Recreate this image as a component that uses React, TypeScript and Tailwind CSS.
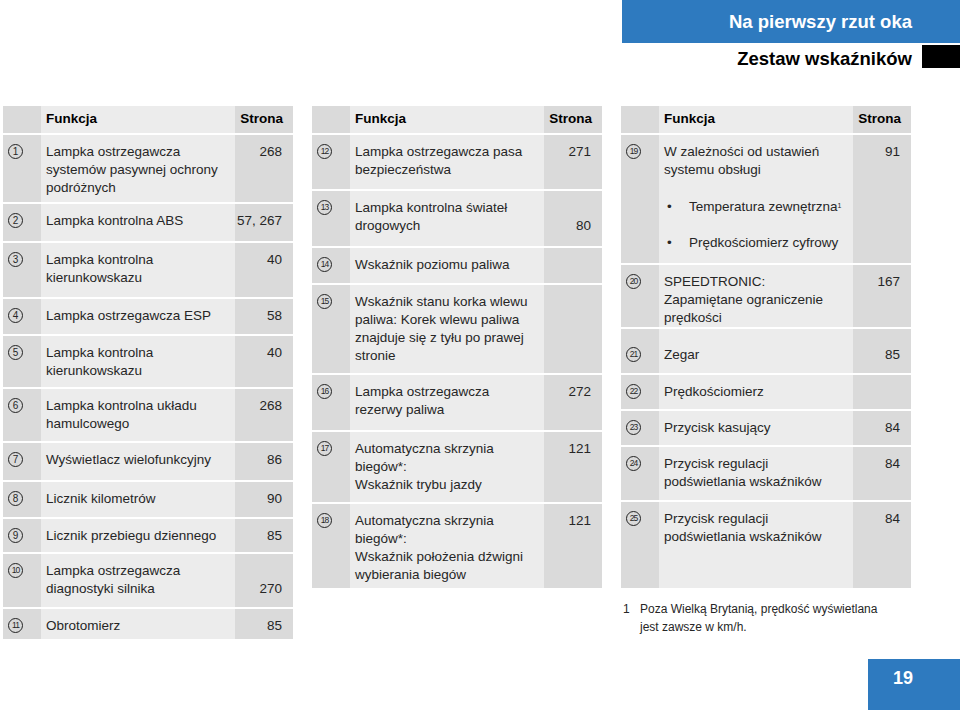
import type { ReactNode } from "react";

type Row = {
  n: number;
  text: ReactNode;
  page?: string;
  h: string;
  low?: boolean;
  pt?: string;
};

const Circle = ({ n }: { n: number }) => (
  <span
    className={`flex h-[15px] w-[15px] items-center justify-center rounded-full border-[1.3px] border-[#222] font-medium leading-none ${
      n > 9 ? "text-[8.5px] tracking-[-0.9px]" : "text-[10px]"
    }`}
  >
    {n}
  </span>
);

const Table = ({ rows }: { rows: Row[] }) => (
  <div className="flex w-[290px] flex-col gap-[2px]">
    <div className="flex h-[27px] font-bold text-black">
      <div className="w-[38px] bg-[#dadada]" />
      <div className="flex flex-1 items-center bg-[#ececec] pb-[2px] pl-[5px]">Funkcja</div>
      <div className="flex w-[58px] items-center justify-end bg-[#dadada] pb-[2px] pr-[10px]">Strona</div>
    </div>
    {rows.map((r) => (
      <div key={r.n} className={`flex ${r.h}`}>
        <div className={`w-[38px] bg-[#dadada] pl-[5px] ${r.pt ? "pt-[18px]" : "pt-[9px]"}`}>
          <Circle n={r.n} />
        </div>
        <div className={`flex-1 whitespace-nowrap bg-[#ececec] pl-[5px] ${r.pt ?? "pt-[8px]"}`}>{r.text}</div>
        <div
          className={`w-[58px] bg-[#dadada] pr-[11px] text-right ${
            r.low ? "pt-[26px]" : r.pt ?? "pt-[8px]"
          }`}
        >
          {r.page}
        </div>
      </div>
    ))}
  </div>
);

const left: Row[] = [
  { n: 1, h: "h-[67px]", page: "268", text: <>Lampka ostrzegawcza<br />systemów pasywnej ochrony<br />podróżnych</> },
  { n: 2, h: "h-[37px]", page: "57, 267", text: "Lampka kontrolna ABS" },
  { n: 3, h: "h-[54px]", page: "40", text: <>Lampka kontrolna<br />kierunkowskazu</> },
  { n: 4, h: "h-[35px]", page: "58", text: "Lampka ostrzegawcza ESP" },
  { n: 5, h: "h-[51px]", page: "40", text: <>Lampka kontrolna<br />kierunkowskazu</> },
  { n: 6, h: "h-[52px]", page: "268", text: <>Lampka kontrolna układu<br />hamulcowego</> },
  { n: 7, h: "h-[37px]", page: "86", text: "Wyświetlacz wielofunkcyjny" },
  { n: 8, h: "h-[35px]", page: "90", text: "Licznik kilometrów" },
  { n: 9, h: "h-[33px]", page: "85", text: "Licznik przebiegu dziennego" },
  { n: 10, h: "h-[53px]", page: "270", low: true, text: <>Lampka ostrzegawcza<br />diagnostyki silnika</> },
  { n: 11, h: "h-[30px]", page: "85", text: "Obrotomierz" },
];

const middle: Row[] = [
  { n: 12, h: "h-[54px]", page: "271", text: <>Lampka ostrzegawcza pasa<br />bezpieczeństwa</> },
  { n: 13, h: "h-[55px]", page: "80", low: true, text: <>Lampka kontrolna świateł<br />drogowych</> },
  { n: 14, h: "h-[35px]", text: "Wskaźnik poziomu paliwa" },
  {
    n: 15,
    h: "h-[88px]",
    text: <>Wskaźnik stanu korka wlewu<br />paliwa: Korek wlewu paliwa<br />znajduje się z tyłu po prawej<br />stronie</>,
  },
  { n: 16, h: "h-[55px]", page: "272", text: <>Lampka ostrzegawcza<br />rezerwy paliwa</> },
  { n: 17, h: "h-[70px]", page: "121", text: <>Automatyczna skrzynia<br />biegów*:<br />Wskaźnik trybu jazdy</> },
  {
    n: 18,
    h: "h-[84px]",
    page: "121",
    text: <>Automatyczna skrzynia<br />biegów*:<br />Wskaźnik położenia dźwigni<br />wybierania biegów</>,
  },
];

const right: Row[] = [
  {
    n: 19,
    h: "h-[128px]",
    page: "91",
    text: (
      <>
        W zależności od ustawień<br />systemu obsługi
        <div className="mt-[19px] flex">
          <span className="w-[25px] pl-[3px]">•</span>
          <span>
            Temperatura zewnętrzna<sup className="text-[7px]">1</sup>
          </span>
        </div>
        <div className="mt-[18px] flex">
          <span className="w-[25px] pl-[3px]">•</span>
          <span>Prędkościomierz cyfrowy</span>
        </div>
      </>
    ),
  },
  { n: 20, h: "h-[62px]", page: "167", text: <>SPEEDTRONIC:<br />Zapamiętane ograniczenie<br />prędkości</> },
  { n: 21, h: "h-[44px]", page: "85", pt: "pt-[17px]", text: "Zegar" },
  { n: 22, h: "h-[34px]", text: "Prędkościomierz" },
  { n: 23, h: "h-[34px]", page: "84", text: "Przycisk kasujący" },
  { n: 24, h: "h-[53px]", page: "84", text: <>Przycisk regulacji<br />podświetlania wskaźników</> },
  { n: 25, h: "h-[86px]", page: "84", text: <>Przycisk regulacji<br />podświetlania wskaźników</> },
];

export default function App() {
  return (
    <div className="flex h-[710px] w-[960px] flex-col bg-white font-['Liberation_Sans',Arial,sans-serif] text-[13.5px] leading-[18px] text-[#262626]">
      <div className="flex justify-end">
        <div className="flex h-[43px] w-[338px] items-center justify-end bg-[#2e7abf] pr-[48px] pt-[1px] text-[18.5px] font-bold text-white">
          Na pierwszy rzut oka
        </div>
      </div>
      <div className="mt-[2px] flex items-center justify-end">
        <span className="pt-[5px] text-[18.5px] font-bold text-black">Zestaw wskaźników</span>
        <div className="ml-[10px] h-[23px] w-[38px] bg-black" />
      </div>

      <div className="mt-[38px] flex gap-[19px] pl-[3px]">
        <Table rows={left} />
        <Table rows={middle} />
        <div className="flex flex-col">
          <Table rows={right} />
          <div className="mt-[12px] flex text-[12px] leading-[18px]">
            <span className="w-[19px] pl-[2px]">1</span>
            <span>
              Poza Wielką Brytanią, prędkość wyświetlana
              <br />
              jest zawsze w km/h.
            </span>
          </div>
        </div>
      </div>

      <div className="mt-auto flex justify-end">
        <div className="h-[51px] w-[92px] bg-[#2e7abf] pl-[25px] pt-[10px] text-[18px] font-bold text-white">19</div>
      </div>
    </div>
  );
}
